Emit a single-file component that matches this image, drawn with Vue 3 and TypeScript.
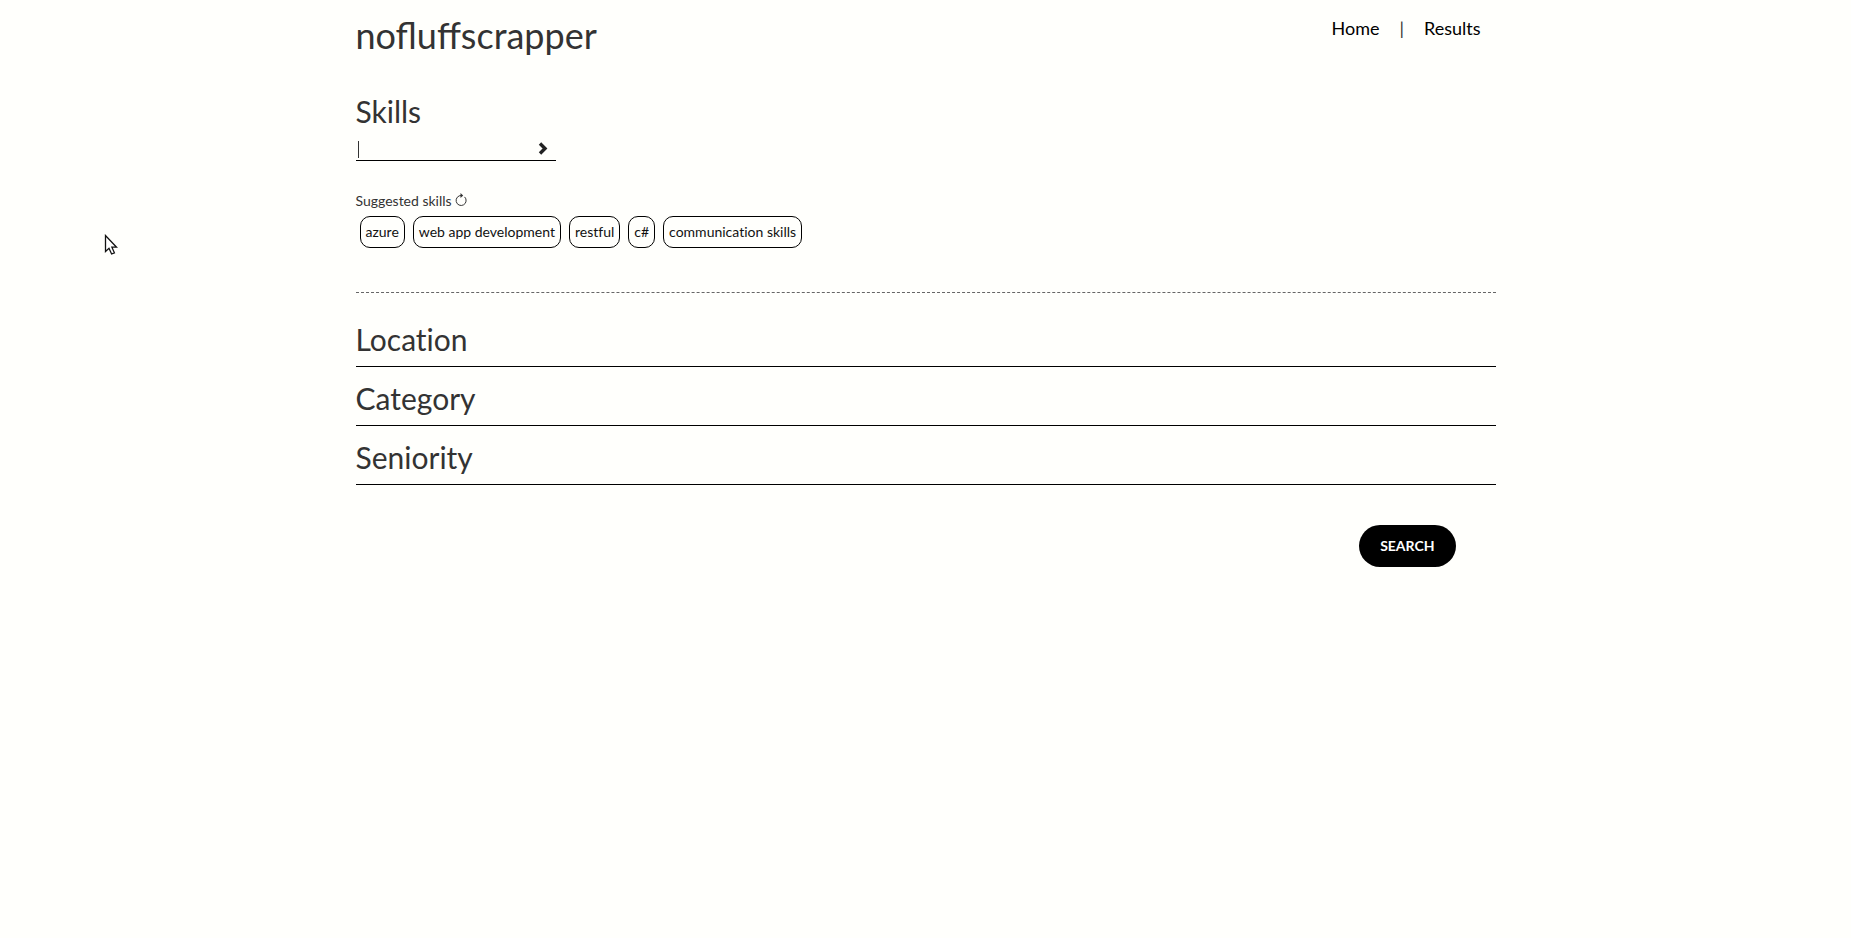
<script setup lang="ts">
import { ref } from 'vue'

const skill = ref('')
const suggestedSkills = ref<string[]>(['azure', 'web app development', 'restful', 'c#', 'communication skills'])
const sections: string[] = ['Location', 'Category', 'Seniority']

function refreshSuggestions(): void {
  suggestedSkills.value = [...suggestedSkills.value].reverse()
}
function pickSkill(name: string): void {
  skill.value = name
}
</script>

<template>
  <div class="container">
    <header class="header">
      <h1 class="brand">nofluffscrapper</h1>
      <nav class="nav">
        <a href="#home">Home</a>
        <span class="divider">|</span>
        <a href="#results">Results</a>
      </nav>
    </header>

    <main>
      <form @submit.prevent>
        <section class="skills">
          <h2 class="heading"><label for="skill">Skills</label></h2>
          <div class="field" :class="{ empty: !skill }">
            <input id="skill" v-model="skill" type="text" autocomplete="off" />
            <button class="add" type="button" aria-label="Add skill">
              <svg viewBox="0 0 10 13" width="10" height="13" aria-hidden="true">
                <path d="M2 1.5 L7 6.5 L2 11.5" fill="none" stroke="currentColor" stroke-width="3.4" />
              </svg>
            </button>
          </div>
          <div class="suggested">
            <span>Suggested skills</span>
            <button class="refresh" type="button" aria-label="Refresh suggestions" @click="refreshSuggestions">
              <svg viewBox="0 0 12 16" width="12" height="16" aria-hidden="true">
                <path d="M6.5 2.5 A5 5 0 1 0 9.6 3.9" fill="none" stroke="currentColor" stroke-width="1" />
                <path d="M5.5 0 L8.2 2.5 L5.5 5 Z" fill="currentColor" />
              </svg>
            </button>
          </div>
          <ul class="chips">
            <li v-for="name in suggestedSkills" :key="name">
              <button class="chip" type="button" @click="pickSkill(name)">{{ name }}</button>
            </li>
          </ul>
        </section>

        <section v-for="title in sections" :key="title" class="panel">
          <h2 class="heading">{{ title }}</h2>
        </section>

        <div class="actions">
          <button class="search" type="submit">SEARCH</button>
        </div>
      </form>
    </main>
  </div>

  <svg class="pointer" viewBox="0 0 14 22" width="14" height="22" aria-hidden="true">
    <path d="M1.5 1.5 V17.5 L5 14.3 L7.6 20 L10.4 18.8 L7.9 13.2 H12.6 Z" fill="#fff" stroke="#111" stroke-width="1.3" />
  </svg>
</template>

<style>
body {
  background: #fffffc;
}
</style>

<style scoped>
.container {
  box-sizing: border-box;
  max-width: 1140px;
  margin: 0 auto;
  color: #333;
  font: 14px/20px Lato, sans-serif;
}
.header {
  display: flex;
  justify-content: space-between;
  align-items: flex-start;
  padding-top: 16px;
}
.brand {
  margin: 0;
  font-size: 36px;
  line-height: 38px;
  font-weight: 400;
}
.nav {
  display: flex;
  gap: 20px;
  padding-right: 15px;
  font-size: 18px;
  line-height: 24px;
}
.nav a {
  color: #000;
  text-decoration: none;
}
.heading {
  margin: 0;
  font-size: 30px;
  line-height: 33px;
  font-weight: 400;
  font-variant-ligatures: none;
}
.skills {
  padding: 41px 0 44px;
  border-bottom: 1px dashed #666;
}
.field {
  position: relative;
  display: flex;
  width: 200px;
  height: 32px;
  border-bottom: 1px solid #000;
}
.field.empty::before {
  content: '';
  position: absolute;
  left: 2px;
  top: 13px;
  width: 1px;
  height: 17px;
  background: #333;
}
.field input {
  flex: 1;
  min-width: 0;
  padding: 12px 2px 0;
  border: 0;
  outline: 0;
  background: transparent;
  color: #333;
  font: inherit;
}
button {
  padding: 0;
  border: 0;
  background: transparent;
  font: inherit;
  cursor: pointer;
}
.add {
  display: flex;
  align-items: flex-end;
  padding: 0 8px 5px 0;
  color: #222;
}
.suggested {
  display: flex;
  align-items: center;
  gap: 3px;
  margin-top: 30px;
}
.refresh {
  display: flex;
  color: #333;
}
.chips {
  display: flex;
  flex-wrap: wrap;
  gap: 8px;
  margin: 5px 0 0;
  padding: 0 4px;
  list-style: none;
}
.chip {
  display: block;
  padding: 5px;
  border: 1px solid #000;
  border-radius: 10px;
  color: #111;
  font-variant-ligatures: none;
}
.panel {
  padding: 15px 0 10px;
  border-bottom: 1px solid #000;
}
.skills + .panel {
  padding-top: 30px;
}
.actions {
  display: flex;
  justify-content: flex-end;
  padding: 40px 40px 0;
}
.search {
  padding: 11px 21px;
  border-radius: 21px;
  background: #000;
  color: #fff;
  font-weight: 700;
}
.pointer {
  position: absolute;
  left: 104px;
  top: 234px;
}
</style>
